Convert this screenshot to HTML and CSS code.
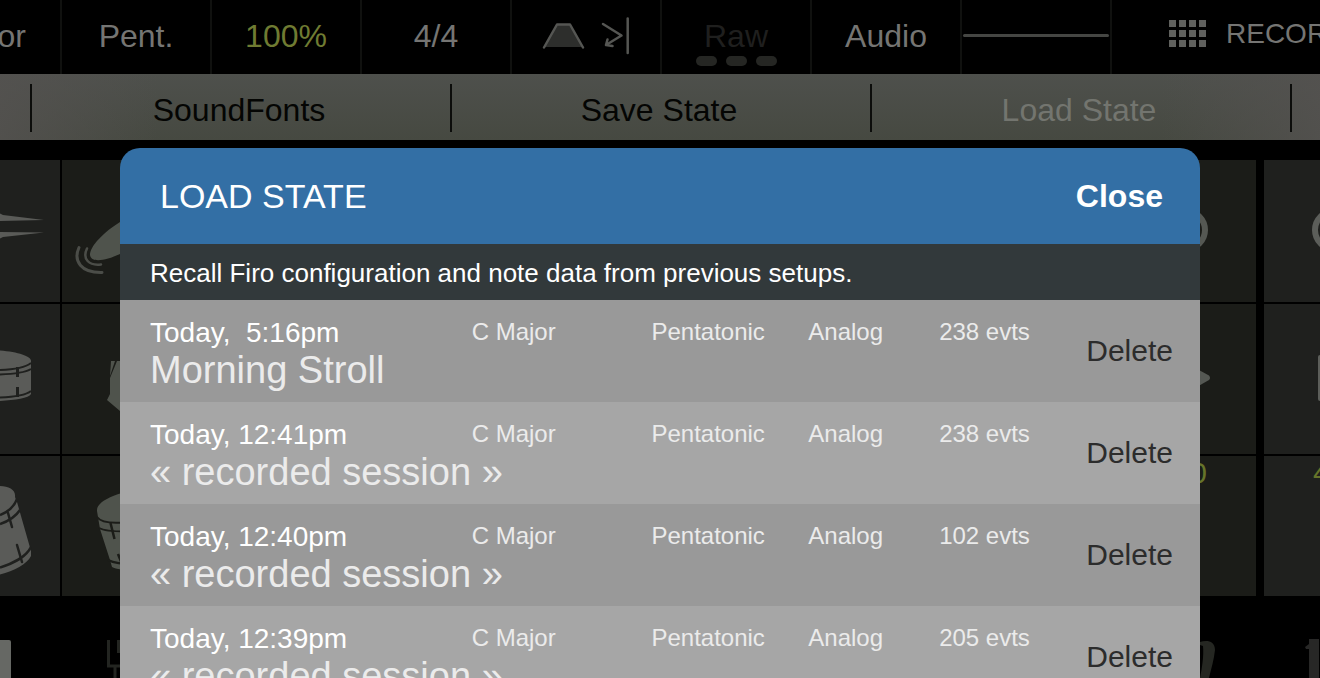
FILE: index.html
```html
<!DOCTYPE html>
<html lang="en">
<head>
    <meta charset="UTF-8">
    <meta name="viewport" content="width=device-width, initial-scale=1.0">
    <title>Firo - Load State</title>
    <link rel="stylesheet" href="styles.css">
</head>
<body>

<header class="toolbar">
    <button class="tool">Major</button>
    <button class="tool">Pent.</button>
    <button class="tool green">100%</button>
    <button class="tool">4/4</button>
    <button class="tool icon" aria-label="Envelope">
        <svg width="148" height="74" viewBox="0 0 148 74">
            <path d="M32 47 L45 24 H58 L71 47 Z" fill="#2d2e2c"/>
            <g fill="none" stroke="#555653" stroke-width="2.5" stroke-linecap="round" stroke-linejoin="round">
                <path d="M32 47.500 L45 24.500 H58 L71 47.500"/>
                <path d="M91 24 L109.500 35.500 L94 45 M95.500 39.500 L94 45 L100.500 46"/>
                <path d="M115.700 18.500 V53"/>
            </g>
        </svg>
    </button>
    <button class="tool raw">Raw
        <span class="pills"><i></i><i></i><i></i></span>
    </button>
    <button class="tool">Audio</button>
    <button class="tool icon" aria-label="Waveform"><span class="wave"></span></button>
    <button class="record">
        <svg width="38" height="28" viewBox="0 0 38 28" fill="#60615e">
            <path d="M0 0h7v7h-7z M10 0h7v7h-7z M20 0h7v7h-7z M30 0h7v7h-7z M0 10h7v7h-7z M10 10h7v7h-7z M20 10h7v7h-7z M30 10h7v7h-7z M0 20h7v7h-7z M10 20h7v7h-7z M20 20h7v7h-7z M30 20h7v7h-7z"/>
        </svg>
        RECORD
    </button>
</header>

<nav class="tabs">
    <button class="tab">SoundFonts</button>
    <button class="tab">Save State</button>
    <button class="tab active">Load State</button>
</nav>

<main class="pads">
    <div class="bank">
        <div class="pad edge">
            <svg width="60" height="142" viewBox="0 0 60 142" fill="#5a5b58">
                <path d="M0 53.500 L3 55 L44 60 L0 61 Z"/>
                <path d="M0 72 L44 72.500 L3 77 L0 78.500 Z"/>
            </svg>
        </div>
        <div class="pad">
            <svg width="148" height="142" viewBox="0 0 148 142">
                <path d="M100 40 C80 48 66 57 58 62 C42 72 28 86 28 95 C29 103 43 101 58 94 C74 86 90 70 100 40 Z" fill="#4f534c"/>
                <g fill="none" stroke="#4b4d48" stroke-linecap="round">
                    <path d="M17 87.500 C11 101 19 113 40 112.500" stroke-width="3"/>
                    <path d="M25 88.500 C20 99 27 106 39 104.500" stroke-width="2.500"/>
                </g>
            </svg>
        </div>
        <div class="pad"></div>
        <div class="pad">
            <svg width="148" height="142" viewBox="0 0 148 142">
                <circle cx="78" cy="70" r="19" fill="none" stroke="#555853" stroke-width="6"/>
            </svg>
        </div>

        <div class="pad edge">
            <svg width="60" height="150" viewBox="0 0 60 150">
                <path d="M0 46.500 C18 48 31 52 31 57 V90 C29 94 15 96 0 97 Z" fill="#5a5b58"/>
                <g fill="none" stroke="#1f201e" stroke-width="2">
                    <path d="M0 66 C14 65.500 26 63 31 59"/>
                    <path d="M0 70.500 C14 70 26 68 31 65"/>
                    <path d="M0 93.500 C14 93 26 91 31 87"/>
                    <path d="M17.500 63 V73 M17.500 83 V93" stroke-width="3"/>
                </g>
            </svg>
        </div>
        <div class="pad">
            <svg width="148" height="150" viewBox="0 0 148 150" fill="#4f534c">
                <path d="M49 57 H53 L48 72 Z"/>
                <path d="M55 57 H90 V107 H58 L45 96 L48 90 V74 Z"/>
            </svg>
        </div>
        <div class="pad"></div>
        <div class="pad">
            <svg width="148" height="150" viewBox="0 0 148 150">
                <path d="M80 60 L101 71.500 Q103 74 101 76 L80 88 Z" fill="#555853"/>
            </svg>
        </div>

        <div class="pad edge">
            <svg width="60" height="140" viewBox="0 0 60 140">
                <path d="M0 30 C9 30 16 34 15 41 L17 46 L31 95 V100 C27 108 14 115 0 118.500 Z" fill="#5a5b58"/>
                <g fill="none" stroke="#1f201e" stroke-width="2.500">
                    <path d="M0 59 C8 56 14 51 17 43"/>
                    <path d="M0 68 C9 65 16 60 20 54"/>
                    <path d="M0 111.500 C12 108 26 101 31 91"/>
                    <path d="M8 57 L12 71 M17 89 L22 106" stroke-linecap="round"/>
                </g>
            </svg>
        </div>
        <div class="pad">
            <svg width="148" height="140" viewBox="0 0 148 140">
                <path d="M90 32 C60 34 34 44 35 55 L38 73 L48 104 L50 111 C55 114 70 115 80 114 L90 70 Z" fill="#4f534c"/>
                <g fill="none" stroke="#1b1c18" stroke-width="2">
                    <path d="M35 61 C40 68 58 68 80 64"/>
                    <path d="M37 72 C44 76 60 76 80 75"/>
                    <path d="M46 104 C52 107 60 109 80 108"/>
                    <path d="M48.500 67 L52.500 83 M56 98 L60 108" stroke-width="2.500"/>
                </g>
            </svg>
        </div>
        <div class="pad"></div>
        <div class="pad value">100</div>
    </div>

    <div class="bank next">
        <div class="pad edge">
            <svg width="56" height="142" viewBox="0 0 56 142">
                <circle cx="70" cy="70" r="19" fill="none" stroke="#5c5e5a" stroke-width="6"/>
            </svg>
        </div>
        <div class="pad edge">
            <svg width="56" height="150" viewBox="0 0 56 150">
                <rect x="54" y="51" width="20" height="46" rx="2" fill="#5c5e5a"/>
            </svg>
        </div>
        <div class="pad edge value cut">4</div>
    </div>
</main>

<footer class="strip">
    <svg width="120" height="82" viewBox="0 0 120 82">
        <rect x="-20" y="44" width="31" height="60" rx="2" fill="#666864"/>
        <path d="M108.500 44 V70 H120 M118.500 44 V57 M115 70 V82" fill="none" stroke="#232521" stroke-width="3"/>
    </svg>
    <svg width="120" height="82" viewBox="0 0 120 82">
        <path d="M0 46 C6 44 15 44 15 54 C14 64 11 73 9 82 H0 C2 72 4 60 3 50 L0 49 Z" fill="#252722"/>
        <path d="M109 43 H119 V82 H109 V53 H106 L105 51 L109 48 Z" fill="#272726"/>
    </svg>
</footer>

<section class="modal" role="dialog" aria-labelledby="modalTitle">
    <div class="modal-header">
        <h1 id="modalTitle">LOAD STATE</h1>
        <button class="close">Close</button>
    </div>
    <p class="hint">Recall Firo configuration and note data from previous setups.</p>
    <ul class="states">
        <li class="state">
            <span class="date">Today,  5:16pm</span>
            <span class="meta">C Major</span>
            <span class="meta">Pentatonic</span>
            <span class="meta">Analog</span>
            <span class="meta">238 evts</span>
            <span class="name">Morning Stroll</span>
            <button class="delete">Delete</button>
        </li>
        <li class="state">
            <span class="date">Today, 12:41pm</span>
            <span class="meta">C Major</span>
            <span class="meta">Pentatonic</span>
            <span class="meta">Analog</span>
            <span class="meta">238 evts</span>
            <span class="name">« recorded session »</span>
            <button class="delete">Delete</button>
        </li>
        <li class="state">
            <span class="date">Today, 12:40pm</span>
            <span class="meta">C Major</span>
            <span class="meta">Pentatonic</span>
            <span class="meta">Analog</span>
            <span class="meta">102 evts</span>
            <span class="name">« recorded session »</span>
            <button class="delete">Delete</button>
        </li>
        <li class="state">
            <span class="date">Today, 12:39pm</span>
            <span class="meta">C Major</span>
            <span class="meta">Pentatonic</span>
            <span class="meta">Analog</span>
            <span class="meta">205 evts</span>
            <span class="name">« recorded session »</span>
            <button class="delete">Delete</button>
        </li>
    </ul>
</section>

</body>
</html>
```
FILE: styles.css
```css
* { box-sizing: border-box; }
html, body { height: 100%; }
body { margin: 0; overflow: hidden; background: #000; color: #757573; font-family: "Liberation Sans", Arial, sans-serif; }
button { margin: 0; padding: 0; border: none; background: none; color: inherit; font: inherit; cursor: pointer; }
svg { display: block; }

/* top toolbar */
.toolbar { display: flex; height: 74px; margin-left: -90px; overflow: hidden; }
.tool { display: flex; flex-direction: column; align-items: center; flex: 0 0 150px; padding-top: 18px; border-left: 2px solid #10110f; font-size: 32px; line-height: 36px; }
.tool.icon { padding-top: 0; }
.green { color: #6f7b32; }
.raw { color: #1f1f1e; }
.pills { display: flex; gap: 9px; margin-top: 2px; }
.pills i { width: 21px; height: 10px; border-radius: 5px; background: #252623; }
.wave { width: 146px; height: 3px; margin-top: 34px; border-radius: 2px; background: #454643; }
.record { display: flex; align-items: center; flex: none; gap: 19px; padding: 0 0 6px 57px; border-left: 2px solid #10110f; font-size: 28px; }

/* tabs */
.tabs { display: flex; height: 66px; padding: 10px 28px 8px 30px; background: linear-gradient(90deg, rgba(84, 82, 80, 0.8), rgba(84, 82, 80, 0) 12%, rgba(84, 82, 80, 0) 88%, rgba(84, 82, 80, 0.8)), linear-gradient(#4e504c, #464941); }
.tab { flex: 1; padding: 4px 4px 0 0; border-left: 2px solid #0c0d0b; color: #040503; font-size: 32px; }
.tab:last-child { border-right: 2px solid #0c0d0b; }
.tab.active { color: #73756f; }

/* drum pads */
.pads { display: flex; gap: 8px; padding-top: 20px; }
.bank { display: grid; flex: 1; grid-template-columns: 60px 148px 1fr 148px; grid-template-rows: 142px 150px 140px; gap: 2px; }
.bank.next { flex: 0 0 56px; grid-template-columns: 56px; }
.pad { overflow: hidden; background: #1b1c18; }
.pad.edge { background: #1f201e; }
.value { color: #66742a; font-size: 30px; line-height: 34px; text-align: center; }
.value.cut { padding-left: 49px; text-align: left; }

.strip { display: flex; justify-content: space-between; height: 82px; }

/* load state dialog */
.modal { position: absolute; top: 148px; right: 120px; bottom: 0; left: 120px; overflow: hidden; border-radius: 20px 20px 0 0; }
.modal-header { display: flex; align-items: center; justify-content: space-between; height: 96px; padding: 0 37px 0 40px; background: #336fa5; color: #fff; }
.modal-header h1 { margin: 0; font-size: 34px; font-weight: normal; }
.close { font-size: 32px; font-weight: bold; }
.hint { margin: 0; padding: 2px 30px 0; background: #32393b; color: #fff; font-size: 26px; line-height: 54px; }
.states { margin: 0; padding: 0; list-style: none; }
.state { display: grid; grid-template-columns: 322fr 180fr 157fr 131fr 145fr 89px; grid-template-rows: 32px 44px; height: 102px; padding: 16px 27px 0 30px; background: #999; white-space: pre; }
.state:nth-child(even) { background: #a6a6a6; }
.date { color: #fff; font-size: 28px; line-height: 34px; }
.meta { color: #ebebeb; font-size: 24px; line-height: 32px; }
.name { grid-column: 1 / 6; grid-row: 2; color: #ebebeb; font-size: 38px; line-height: 44px; }
.delete { grid-column: 6; grid-row: 1 / 3; padding-bottom: 6px; color: #2c2c2c; font-size: 30px; text-align: right; }
```
